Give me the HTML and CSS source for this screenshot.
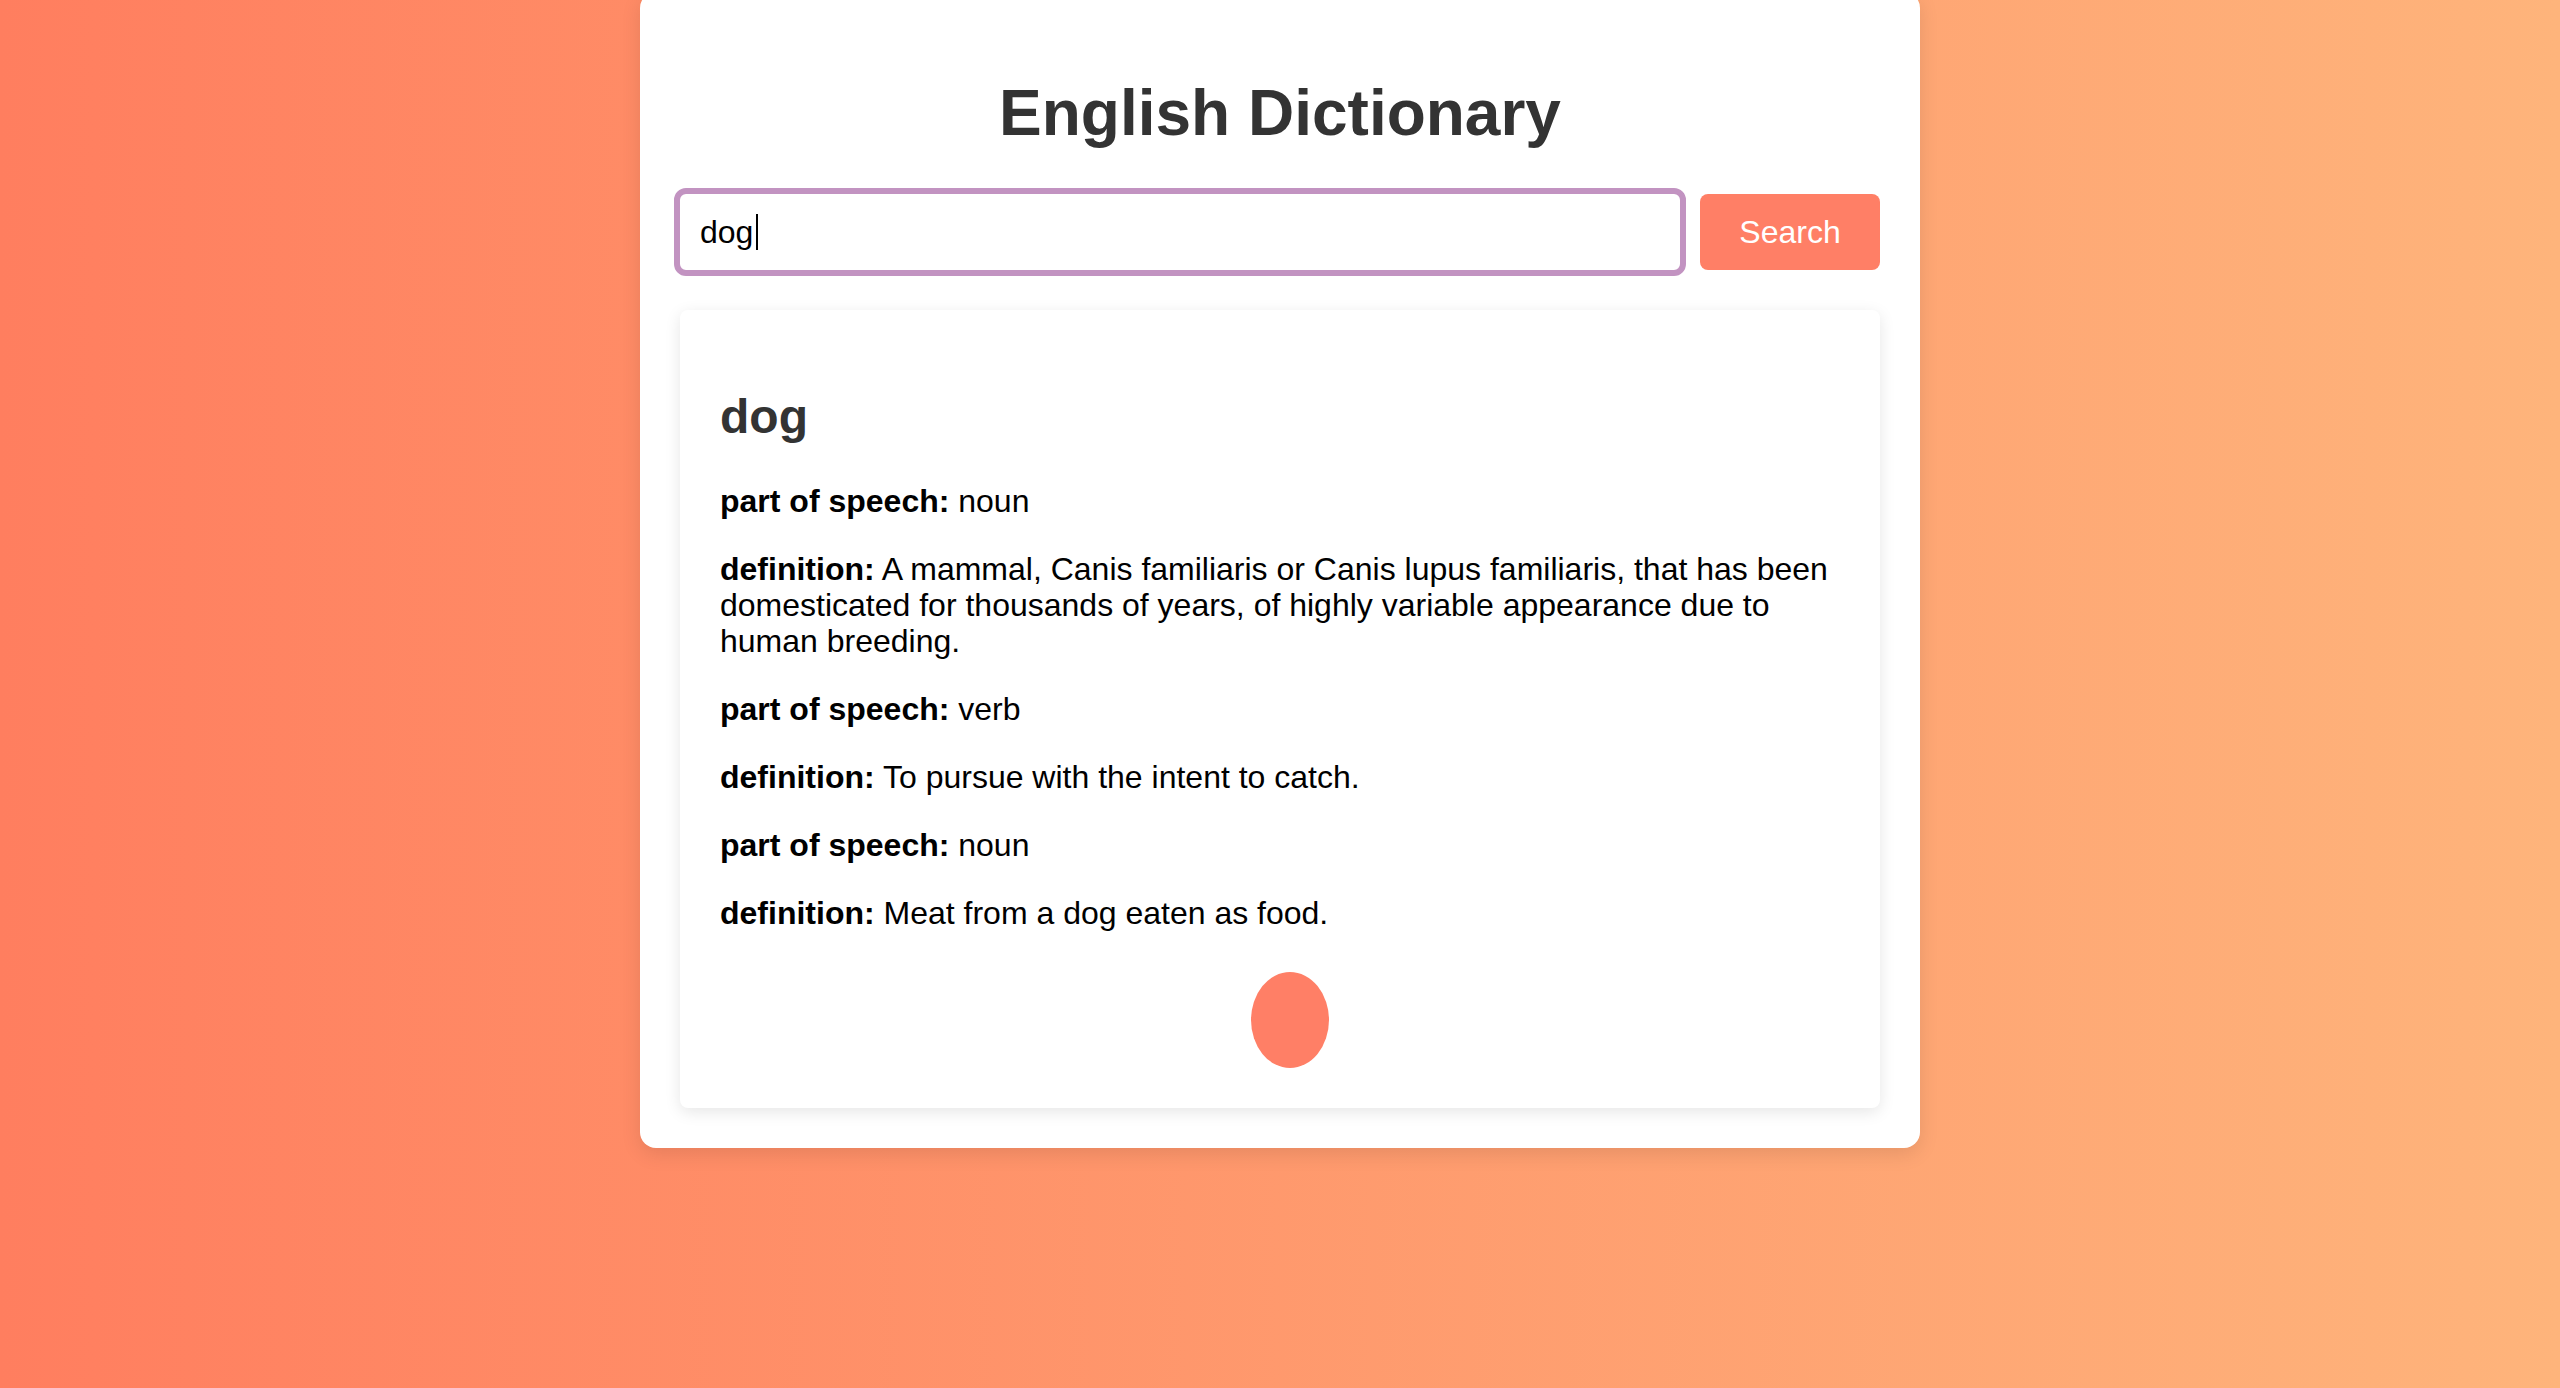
FILE: index.html
```html
<!DOCTYPE html>
<html lang="en">
<head>
<meta charset="utf-8">
<title>English Dictionary</title>
<link rel="stylesheet" href="styles.css">
</head>
<body>
<main class="container">
  <h1 class="title">English Dictionary</h1>
  <div class="search-row">
    <div class="input-wrap">
      <input class="search-input" type="text" value="dog">
      <span class="caret"></span>
    </div>
    <button class="search-btn" type="button">Search</button>
  </div>
  <section class="result">
    <h2 class="word">dog</h2>
    <p class="entry"><strong>part of speech:</strong> noun</p>
    <p class="entry"><strong>definition:</strong> A mammal, Canis familiaris or Canis lupus familiaris, that has been domesticated for thousands of years, of highly variable appearance due to human breeding.</p>
    <p class="entry"><strong>part of speech:</strong> verb</p>
    <p class="entry"><strong>definition:</strong> To pursue with the intent to catch.</p>
    <p class="entry"><strong>part of speech:</strong> noun</p>
    <p class="entry"><strong>definition:</strong> Meat from a dog eaten as food.</p>
    <div class="blob"></div>
  </section>
</main>
</body>
</html>
```

FILE: styles.css
```css
html, body {
  margin: 0;
  padding: 0;
}

body {
  min-height: 100vh;
  overflow: hidden;
  background: linear-gradient(to right, #ff7e5f, #feb47b);
  font-family: "Liberation Sans", Arial, Helvetica, sans-serif;
}

.container {
  box-sizing: border-box;
  width: 1280px;
  margin: -8px auto 0;
  padding: 40px;
  background: #ffffff;
  border-radius: 16px;
  box-shadow: 0 6px 20px rgba(0, 0, 0, 0.1);
}

.title {
  margin: 44px 0 44px;
  font-size: 64px;
  line-height: 74px;
  font-weight: 700;
  color: #333333;
  text-align: center;
}

.search-row {
  display: flex;
  align-items: center;
  gap: 20px;
}

.input-wrap {
  flex: 1;
  display: flex;
  position: relative;
}

.search-input {
  flex: 1;
  min-width: 0;
  box-sizing: border-box;
  height: 76px;
  padding: 0 20px;
  border: none;
  border-radius: 6px;
  outline: 6px solid #c293c1;
  outline-offset: 0;
  font-family: "Liberation Sans", Arial, Helvetica, sans-serif;
  font-size: 32px;
  color: #000000;
  background: #ffffff;
}

.search-input:focus {
  outline: 6px solid #c293c1;
}

.caret {
  position: absolute;
  left: 76px;
  top: 20px;
  width: 2px;
  height: 36px;
  background: #000000;
}

.search-btn {
  box-sizing: border-box;
  width: 180px;
  height: 76px;
  padding: 0;
  border: none;
  border-radius: 8px;
  background: #ff7f66;
  color: #ffffff;
  font-family: "Liberation Sans", Arial, Helvetica, sans-serif;
  font-size: 32px;
  cursor: pointer;
}

.result {
  margin-top: 40px;
  padding: 40px;
  background: #ffffff;
  border-radius: 8px;
  box-shadow: 0 4px 16px rgba(0, 0, 0, 0.1);
}

.word {
  margin: 40px 0 39px;
  font-size: 48px;
  line-height: 54px;
  font-weight: 700;
  color: #333333;
}

.entry {
  margin: 32px 0;
  font-size: 32px;
  line-height: 36px;
  color: #000000;
}

.entry strong {
  font-weight: 700;
}

.blob {
  width: 78px;
  height: 96px;
  margin: 41px 0 0 calc(50% - 29px);
  border-radius: 50%;
  background: #ff7f66;
}
```
